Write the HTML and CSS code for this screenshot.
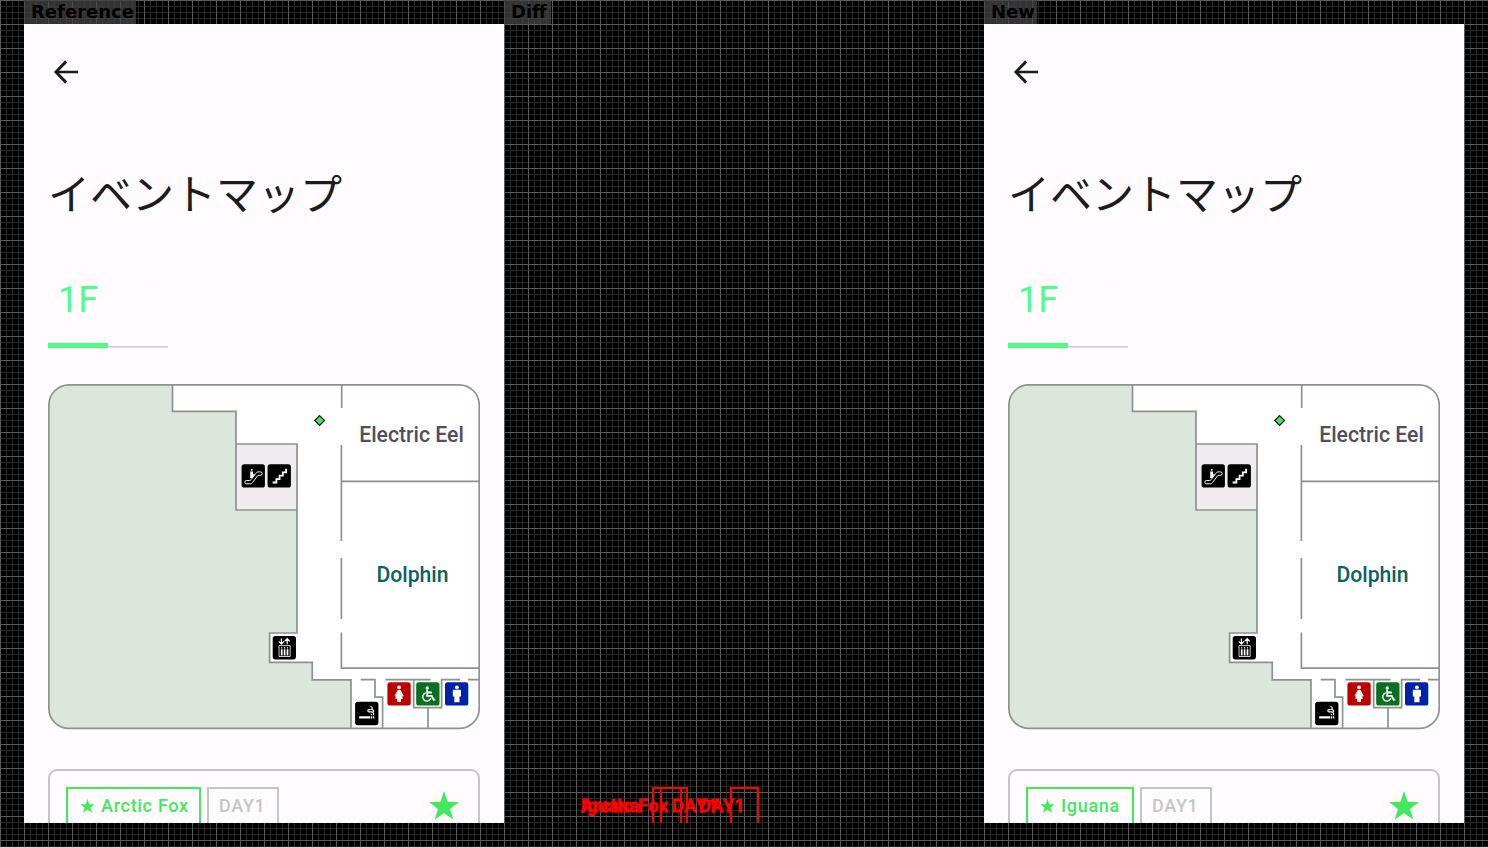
FILE: index.html
```
<!DOCTYPE html>
<html lang="ja">
<head>
<meta charset="utf-8">
<title>イベントマップ</title>
<link rel="stylesheet" href="styles.css">
</head>
<body>
<svg class="defs" width="0" height="0">
  <symbol id="back" viewBox="0 0 24 24"><path d="M20 11.1H7.4l5.45-5.5-1.4-1.4L4 12l7.450 7.8 1.400-1.400L7.4 12.9H20z" fill="#1a1c1e"/></symbol>
  <symbol id="star" viewBox="0 0 30 29"><path d="M15 0l3.7 10.7L30 10.9l-9 7 3.4 10.7L15 22.2l-9.3 6.4L9 17.9l-9-7 11.4-.2z" fill="#43e85f"/></symbol>
  <symbol id="floor" viewBox="48 384 432 346">
    <rect x="48.9" y="384.9" width="430.3" height="343.5" rx="20" fill="#fff"/>
    <path fill="#dde6dd" d="M69 384.9H172.5V411.3H236V510H297V633H269.6V662.3H312.3V679.8H351V728.4H69a20 20 0 0 1-20-20V405a20 20 0 0 1 20-20z"/>
    <path fill="#f0ebee" d="M236 444H297V510H236z"/>
    <g fill="none" stroke="#8b948d" stroke-width="1.7">
      <rect x="48.9" y="384.9" width="430.3" height="343.5" rx="20"/>
      <path d="M172.5 385V411.3H236V510H297M236 444H297V633H269.6V662.3H312.3V679.8H351V728"/>
      <path d="M341.7 385V408M341.4 445V541M341.4 558V619M341.4 632.5V668.2H479M341.4 481.3H479"/>
      <path d="M360.7 679.6H375V697.2H382.6V728M385.3 679.6H430.7M413.7 679.6V707.6H441.6V679.6H460M468 679.6H479M428 707.6V728"/>
    </g>
    <path d="M319.6 415.6l4.9 4.9-4.9 4.9-4.9-4.9z" fill="#43e85f" stroke="#111" stroke-width="1.2"/>
    <g>
      <rect x="241.6" y="464.2" width="23.3" height="23.4" rx="2.6"/>
      <path d="M246.500 480.500h3.200c.6 0 1-.3 1.400-.8l4.700-6.300c.5-.8 1.100-1.500 2-1.500h2.700a1.700 1.700 0 0 1 0 3.400h-1.800c-.6 0-1 .3-1.400.8l-4.600 6.300c-.6.800-1.200 1.400-2.200 1.400h-4a1.650 1.650 0 0 1 0-3.300z" fill="none" stroke="#fff" stroke-width=".95"/>
      <circle cx="251.700" cy="469.800" r="1" fill="#fff"/>
      <path d="M250.200 471.400h2.900v3l1.300-.8v1.200l-2 3.200h-2.200z" fill="#fff"/>
    </g>
    <g>
      <rect x="267.6" y="464.200" width="23.3" height="23.4" rx="2.6"/>
      <path d="M272.600 482.500h3.800v-3.300h3.200v-3.500h3.200v-3.400h3.300v-3.500" fill="none" stroke="#fff" stroke-width="1.8"/>
    </g>
    <g>
      <rect x="272.7" y="636" width="23.3" height="23.4" rx="2.6"/>
      <path d="M281.400 638.400v5.600M278.800 641.400l2.600 2.700 2.600-2.700M287.200 644.300V638.700M284.600 641.400l2.600-2.700 2.600 2.700" fill="none" stroke="#fff" stroke-width="1.200"/>
      <path d="M279 645.600h11.200v10.900H279z" fill="none" stroke="#fff" stroke-width=".8"/>
      <path d="M281.700 649.200v6.200M284.600 649.200v6.200M287.500 649.200v6.200" stroke="#fff" stroke-width="1.700"/>
      <path d="M281.700 647.200v1.300M284.600 647.200v1.300M287.500 647.200v1.300" stroke="#fff" stroke-width="1.200"/>
    </g>
    <g>
      <rect x="355.100" y="701.800" width="23.300" height="23.400" rx="2.600"/>
      <path d="M359.200 716.200h11v2.300h-11zM370.900 716.200h1.300v2.300h-1.300zM372.900 716.200h1.300v2.300h-1.300z" fill="#fff"/>
      <path d="M373.500 715.200v-1.600c0-1.200-.8-1.700-2-1.700h-2.300c-1.600 0-2-1.900-.5-2.300h2M370.500 706.500c2.200.4 2.300 2.200.8 3 2.100 0 2.500.9 2.500 2.300M371.500 715.200v-1.400" fill="none" stroke="#fff" stroke-width="1.100"/>
    </g>
    <g>
      <rect x="387.400" y="682.200" width="23.300" height="23.300" rx="2.600" fill="#bc0000"/>
      <circle cx="399.100" cy="687.300" r="1.900" fill="#fff"/>
      <path d="M397.700 689.900h2.800l3.200 6.100-1.100.7-1-1.300 1.400 3.400h-2v3.100h-3.800v-3.100h-2l1.400-3.400-1 1.300-1.100-.7z" fill="#fff"/>
    </g>
    <g>
      <rect x="416.200" y="682.200" width="23.300" height="23.300" rx="2.600" fill="#07701f"/>
      <circle cx="427.200" cy="687.900" r="1.600" fill="#fff"/>
      <path d="M427.200 689.500v6.300h4.500l2 4.100 1.500-.6M427.500 692.500h4.300" fill="none" stroke="#fff" stroke-width="1.800"/>
      <path d="M425.600 692.900a4.200 4.200 0 1 0 5.400 5.100" fill="none" stroke="#fff" stroke-width="1.400"/>
    </g>
    <g>
      <rect x="445" y="682.200" width="23.300" height="23.300" rx="2.600" fill="#0221a5"/>
      <circle cx="456.900" cy="687.300" r="1.900" fill="#fff"/>
      <path d="M454 689.800h5.800c.8 0 1.200.5 1.200 1.200v5.500h-1.500v5.800h-5.200v-5.800h-1.500v-5.500c0-.7.400-1.200 1.200-1.200z" fill="#fff"/>
    </g>
  </symbol>
</svg>
<main class="board">
  <header class="labels">
    <div><span class="label">Reference</span></div>
    <div><span class="label short">Diff</span></div>
    <div><span class="label">New</span></div>
  </header>
  <section class="phone">
    <svg class="back"><use href="#back"/></svg>
    <h1>イベントマップ</h1>
    <nav class="tabs"><span class="tab active">1F</span><span class="tab">2F</span></nav>
    <div class="map">
      <svg class="floor"><use href="#floor"/></svg>
      <span class="room eel">Electric Eel</span>
      <span class="room dolphin">Dolphin</span>
    </div>
    <article class="card">
      <span class="chip fox"><svg><use href="#star"/></svg>Arctic Fox</span>
      <span class="chip day">DAY1</span>
      <svg class="favorite"><use href="#star"/></svg>
    </article>
  </section>
  <section class="diff">
    <span class="mark m1"></span><span class="mark m2"></span><span class="mark m3"></span>
    <span class="word w1">Arctic Fox</span>
    <span class="word w2">Iguana</span>
    <span class="word w3">DAY1</span>
    <span class="word w4">DAY1</span>
  </section>
  <section class="phone">
    <svg class="back"><use href="#back"/></svg>
    <h1>イベントマップ</h1>
    <nav class="tabs"><span class="tab active">1F</span><span class="tab">2F</span></nav>
    <div class="map">
      <svg class="floor"><use href="#floor"/></svg>
      <span class="room eel">Electric Eel</span>
      <span class="room dolphin">Dolphin</span>
    </div>
    <article class="card">
      <span class="chip iguana"><svg><use href="#star"/></svg>Iguana</span>
      <span class="chip day">DAY1</span>
      <svg class="favorite"><use href="#star"/></svg>
    </article>
  </section>
</main>
</body>
</html>
```
FILE: styles.css
```
* { box-sizing: border-box; }
body { margin: 0; overflow: hidden; background: #000; font-family: Roboto, "Noto Sans CJK JP", sans-serif; }
.defs { position: absolute; }
.board {
  width: 1488px; height: 847px; padding: 0 24px;
  display: grid; grid-template-columns: repeat(3, 480px); grid-template-rows: 24px 799px;
  background:
    repeating-linear-gradient(90deg, #5a5a5a 0 1px, transparent 1px 24px),
    repeating-linear-gradient(#5a5a5a 0 1px, transparent 1px 24px),
    repeating-linear-gradient(90deg, #272727 0 1px, transparent 1px 6px),
    repeating-linear-gradient(#272727 0 1px, transparent 1px 6px), #000;
}
.labels { grid-column: 1 / 4; display: grid; grid-template-columns: subgrid; }
.label {
  display: inline-block; height: 24px; padding: 0 2px 0 7px; vertical-align: top;
  background: rgba(68, 68, 68, .75); color: #000;
  font: bold 18px/23px "DejaVu Sans", sans-serif;
}
.short { padding-right: 4px; }
.phone {
  height: 799px; overflow: hidden; padding: 30px 24px 0; background: #fffbff;
  display: flex; flex-direction: column;
}
.back { width: 36px; height: 36px; flex: none; }
h1 {
  margin: 70px 0 0; height: 64px; color: #1a1c1e; white-space: nowrap;
  font: 400 42px/64px "Noto Sans CJK JP", sans-serif;
}
.tabs { display: flex; margin-top: 50px; height: 74px; width: 120px; flex: none; }
.tab {
  width: 60px; height: 74px; padding-top: 2px; text-align: center; color: #fff;
  font-size: 36px; line-height: 48px;
  background: linear-gradient(#cac5d4, #e4dfec) bottom / 100% 2px no-repeat;
}
.active { color: #4dff82; background: linear-gradient(#4dff82, #4dff82) bottom / 100% 5px no-repeat; }
.map { position: relative; width: 432px; height: 346px; margin-top: 36px; flex: none; }
.floor { display: block; width: 432px; height: 346px; }
.room { position: absolute; font-weight: 500; font-size: 21.2px; line-height: 24px; white-space: nowrap; transform: translateX(-50%); }
.eel { left: 363.5px; top: 38.5px; color: #4d505f; }
.dolphin { left: 364.5px; top: 178.5px; color: #0b6060; }
.card {
  flex: none; margin-top: 39px; height: 120px; padding: 16px 19px 0 16px;
  border: 2px solid #c5c5c7; border-radius: 9px;
  display: flex; gap: 6px; align-items: flex-start;
}
.chip {
  height: 50px; border: 2px solid #43e85f; color: #43e85f; white-space: nowrap;
  font-weight: 500; font-size: 18px; line-height: 34px; letter-spacing: .7px;
  display: flex; justify-content: flex-start; padding-left: 11.5px;
}
.chip svg { width: 15px; height: 14px; margin: 10px 6.5px 0 0; flex: none; }
.fox { width: 135px; }
.iguana { width: 108px; }
.day { width: 72px; padding-left: 10px; border-color: #bfc9c2; color: #bfc9c2; }
.favorite { width: 30px; height: 29px; margin: 4px 0 0 auto; }
.diff { position: relative; overflow: hidden; }
.mark { position: absolute; top: 763px; height: 36px; border: 2px solid red; border-bottom: 0; }
.m1 { left: 148px; width: 36px; }
.m2 { left: 156px; width: 22px; }
.m3 { left: 226px; width: 29px; }
.word {
  position: absolute; top: 765px; color: red; -webkit-text-stroke: .8px red;
  font-weight: 500; font-size: 18px; line-height: 34px; letter-spacing: .7px; white-space: nowrap;
}
.w1, .w2 { left: 77px; }
.w3 { left: 195px; }
.w4 { left: 168px; }
```
